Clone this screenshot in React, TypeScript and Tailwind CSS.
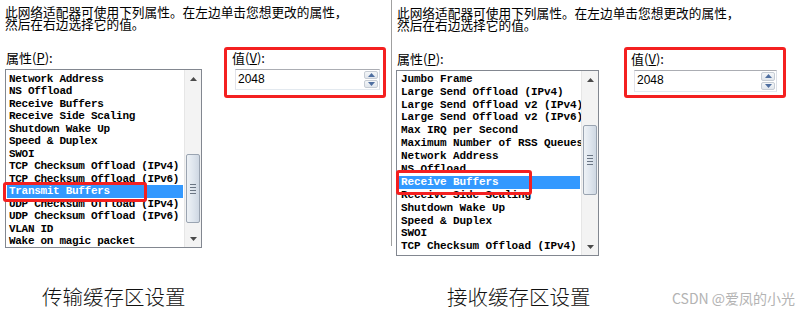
const cjk = "font-['Noto_Sans_CJK_SC','Noto_Sans',sans-serif]";
const mono = "font-['Liberation_Mono','Noto_Sans_CJK_SC',monospace]";

const leftItems = [
  'Network Address',
  'NS Offload',
  'Receive Buffers',
  'Receive Side Scaling',
  'Shutdown Wake Up',
  'Speed & Duplex',
  'SWOI',
  'TCP Checksum Offload (IPv4)',
  'TCP Checksum Offload (IPv6)',
  'Transmit Buffers',
  'UDP Checksum Offload (IPv4)',
  'UDP Checksum Offload (IPv6)',
  'VLAN ID',
  'Wake on magic packet',
];

const rightItems = [
  'Jumbo Frame',
  'Large Send Offload (IPv4)',
  'Large Send Offload v2 (IPv4)',
  'Large Send Offload v2 (IPv6)',
  'Max IRQ per Second',
  'Maximum Number of RSS Queues',
  'Network Address',
  'NS Offload',
  'Receive Buffers',
  'Receive Side Scaling',
  'Shutdown Wake Up',
  'Speed & Duplex',
  'SWOI',
  'TCP Checksum Offload (IPv4)',
];

type PanelCfg = {
  items: string[];
  selected: number;
  wrap: string;
  header: string;
  labelRow: string;
  listCol: string;
  list: string;
  listPad: string;
  item: string;
  thumbGap: string;
  thumb: string;
  valueCol: string;
  spin: string;
  redValue: string;
  redItem: string;
};

const leftCfg: PanelCfg = {
  items: leftItems,
  selected: 9,
  wrap: 'w-[391px] pl-[5px] pt-[6px]',
  header: 'text-[12.7px] h-[12px] leading-[12px]',
  labelRow: 'mt-[20px]',
  listCol: 'w-[197px]',
  list: 'h-[179px]',
  listPad: 'pt-[2.5px]',
  item: 'h-[12.5px] leading-[12.5px] text-[11px] tracking-[-0.3px] pl-[2px]',
  thumbGap: 'h-[67px]',
  thumb: 'h-[69px]',
  valueCol: 'ml-[30px]',
  spin: 'w-[145px] h-[21px] ml-[3px]',
  redValue: '-left-[8px] -top-[3px] w-[162px] h-[51px]',
  redItem: '-left-[2px] top-[132px] w-[144px] h-[20px]',
};

const rightCfg: PanelCfg = {
  items: rightItems,
  selected: 8,
  wrap: 'w-[410px] pl-[4px] pt-[7px]',
  header: 'text-[12.7px] h-[11.5px] leading-[11.5px] pl-[1px]',
  labelRow: 'mt-[21px]',
  listCol: 'w-[203px]',
  list: 'h-[186px]',
  listPad: 'pt-[1.8px]',
  item: 'h-[12.9px] leading-[12.9px] text-[11px] tracking-[-0.1px] pl-[3px]',
  thumbGap: 'h-[37px]',
  thumb: 'h-[70px]',
  valueCol: 'ml-[32px]',
  spin: 'w-[143px] h-[22px] ml-[3px]',
  redValue: '-left-[7px] -top-[4px] w-[162px] h-[51px]',
  redItem: 'left-0 top-[119px] w-[136px] h-[25px]',
};

function Arrow({ up, color = '#4a4a4a' }: { up?: boolean; color?: string }) {
  return (
    <svg width="7" height="4" viewBox="0 0 7 4">
      <path d={up ? 'M0 4 L3.5 0 L7 4 Z' : 'M0 0 L3.5 4 L7 0 Z'} fill={color} />
    </svg>
  );
}

function ScrollBar({ cfg }: { cfg: PanelCfg }) {
  return (
    <div className="w-[17px] h-full flex flex-col bg-[#f3f3f3] border-l border-[#e6e6e6]">
      <div className="h-[17px] flex items-center justify-center">
        <Arrow up />
      </div>
      <div className="flex-1">
        <div className={cfg.thumbGap} />
        <div
          className={`${cfg.thumb} mx-[1px] rounded-[2px] border border-[#9aa4b1] bg-gradient-to-r from-[#eef2f6] via-[#dfe6ee] to-[#cfd8e3] flex flex-col items-center justify-center gap-[2px]`}
        >
          <div className="w-[6px] h-px bg-[#6a7583]" />
          <div className="w-[6px] h-px bg-[#6a7583]" />
          <div className="w-[6px] h-px bg-[#6a7583]" />
          <div className="w-[6px] h-px bg-[#6a7583]" />
        </div>
      </div>
      <div className="h-[17px] flex items-center justify-center">
        <Arrow />
      </div>
    </div>
  );
}

function SpinBox({ cls }: { cls: string }) {
  return (
    <div
      className={`${cls} flex border border-[#abadb3] border-l-[#e2e3ea] border-b-[#e3e9ef] border-r-[#dbdfe6] bg-white`}
    >
      <div className="flex-1 pl-[2px] text-[12px] leading-[19px] font-['Liberation_Sans',sans-serif]">2048</div>
      <div className="w-[16px] flex flex-col gap-px p-px">
        <div className="flex-1 flex items-center justify-center rounded-[2px] border border-[#c6ccd4] bg-gradient-to-b from-[#f4f6f8] to-[#e1e6ec]">
          <Arrow up color="#4f6fa0" />
        </div>
        <div className="flex-1 flex items-center justify-center rounded-[2px] border border-[#c6ccd4] bg-gradient-to-b from-[#f4f6f8] to-[#e1e6ec]">
          <Arrow color="#4f6fa0" />
        </div>
      </div>
    </div>
  );
}

function Panel({ cfg }: { cfg: PanelCfg }) {
  return (
    <div className={`${cfg.wrap} ${cjk} text-black`}>
      <div className={`${cfg.header} whitespace-nowrap`}>此网络适配器可使用下列属性。在左边单击您想更改的属性，</div>
      <div className={`${cfg.header} whitespace-nowrap`}>然后在右边选择它的值。</div>
      <div className={`${cfg.labelRow} flex`}>
        <div className={`${cfg.listCol} relative`}>
          <div className="h-[19px] text-[13px] leading-[15px] pl-px">
            属性(<u>P</u>):
          </div>
          <div className={`${cfg.list} flex border border-[#828790] bg-white`}>
            <div className={`flex-1 min-w-0 overflow-hidden px-px ${cfg.listPad} ${mono} font-bold`}>
              {cfg.items.map((it, i) => (
                <div
                  key={it}
                  className={`${cfg.item} whitespace-nowrap ${
                    i === cfg.selected ? 'bg-[#3399ff] text-white' : ''
                  }`}
                >
                  {it}
                </div>
              ))}
            </div>
            <ScrollBar cfg={cfg} />
          </div>
          <div className={`absolute ${cfg.redItem} border-[3px] border-[#f42020] rounded-[3px]`} />
        </div>
        <div className={`${cfg.valueCol} relative`}>
          <div className="h-[19px] text-[13px] leading-[15px]">
            值(<u>V</u>):
          </div>
          <SpinBox cls={cfg.spin} />
          <div className={`absolute ${cfg.redValue} border-[3px] border-[#f42020] rounded-[3px]`} />
        </div>
      </div>
    </div>
  );
}

export default function App() {
  return (
    <div className="w-[803px] h-[316px] bg-white overflow-hidden">
      <div className="flex h-[262px]">
        <Panel cfg={leftCfg} />
        <div className="w-px h-[246px] bg-[#a0a0a0]" />
        <Panel cfg={rightCfg} />
      </div>
      <div className={`flex items-end mt-[22px] ${cjk}`}>
        <div className="w-[447px] pl-[42px] text-[20.5px] leading-[24px] font-light text-[#111]">传输缓存区设置</div>
        <div className="w-[225px] text-[20.5px] leading-[24px] font-light text-[#111]">接收缓存区设置</div>
        <div className="text-[14px] leading-[20px] text-[#b3b3b3]">CSDN @爱凤的小光</div>
      </div>
    </div>
  );
}
